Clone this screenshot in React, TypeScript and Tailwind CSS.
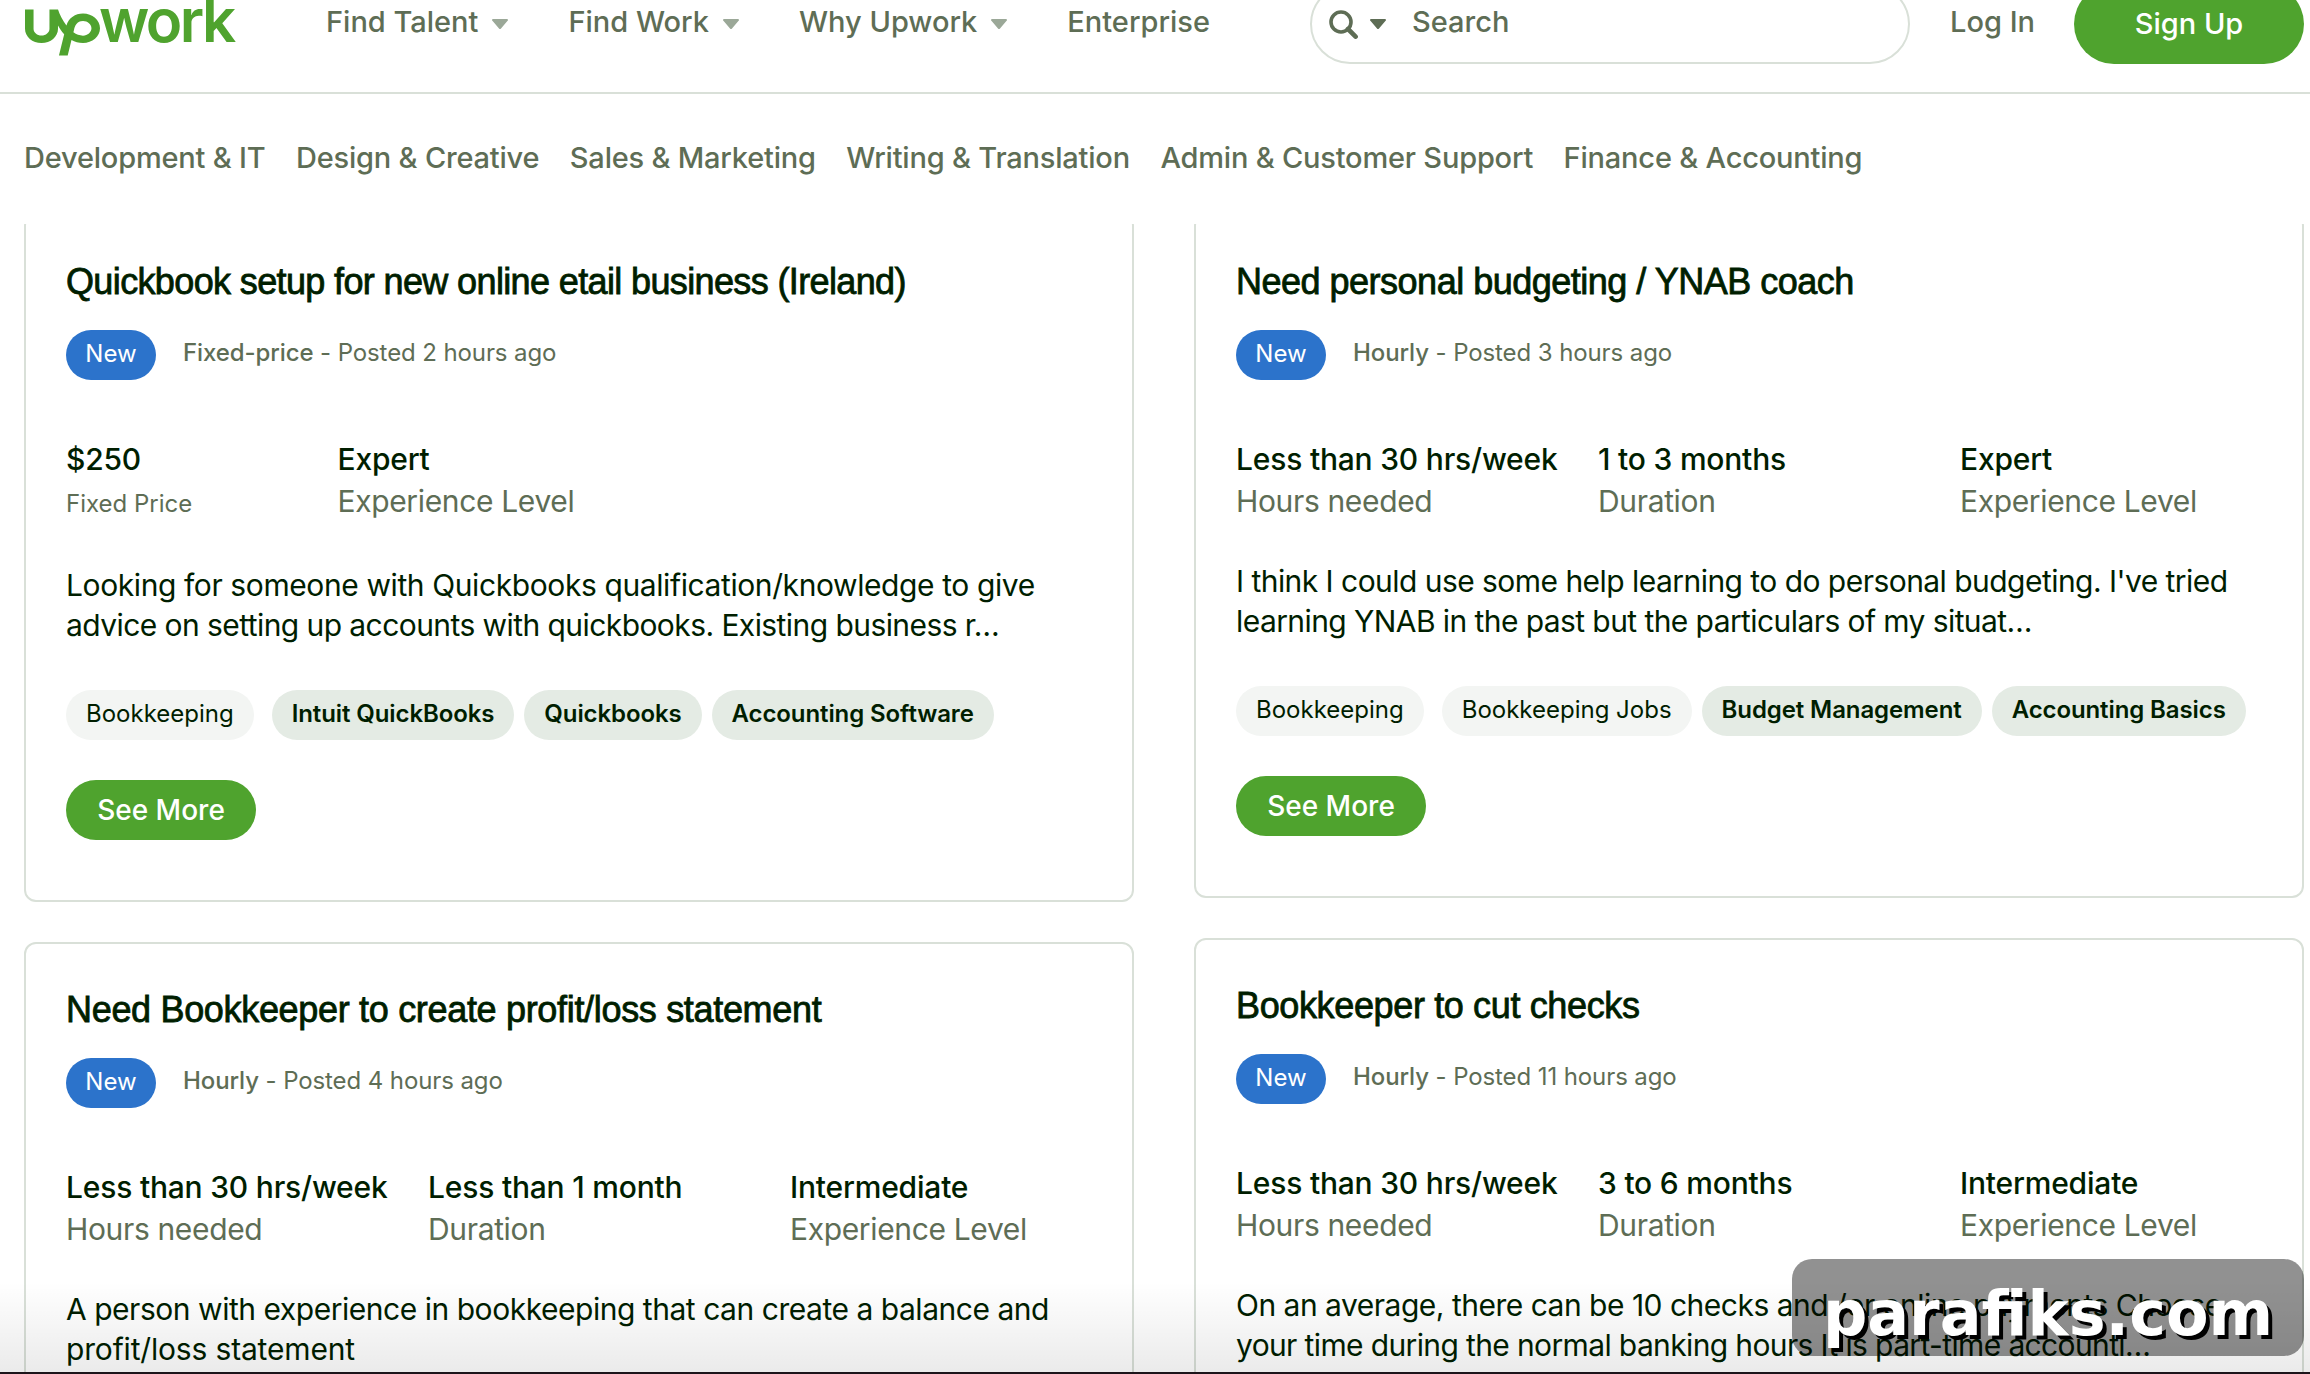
import clsx from "clsx";
import { SiUpwork } from "react-icons/si";

type Tag = { label: string; strong?: boolean };
type Stat = { value: string; label: string; small?: boolean };
type Line = { text: string; spacing: string };
type Job = {
  title: Line;
  type: string;
  posted: string;
  stats: Stat[];
  body: Line[];
  tags: Tag[];
};

const navItems = [
  { label: "Find Talent", menu: true },
  { label: "Find Work", menu: true },
  { label: "Why Upwork", menu: true },
  { label: "Enterprise", menu: false },
];

const categories = [
  "Development & IT",
  "Design & Creative",
  "Sales & Marketing",
  "Writing & Translation",
  "Admin & Customer Support",
  "Finance & Accounting",
];

const leftJobs: Job[] = [
  {
    title: { text: "Quickbook setup for new online etail business (Ireland)", spacing: "tracking-[-0.63px]" },
    type: "Fixed-price",
    posted: "Posted 2 hours ago",
    stats: [
      { value: "$250", label: "Fixed Price", small: true },
      { value: "Expert", label: "Experience Level" },
    ],
    body: [
      { text: "Looking for someone with Quickbooks qualification/knowledge to give", spacing: "tracking-[-0.4px]" },
      { text: "advice on setting up accounts with quickbooks. Existing business r…", spacing: "tracking-[-0.57px]" },
    ],
    tags: [
      { label: "Bookkeeping" },
      { label: "Intuit QuickBooks", strong: true },
      { label: "Quickbooks", strong: true },
      { label: "Accounting Software", strong: true },
    ],
  },
  {
    title: { text: "Need Bookkeeper to create profit/loss statement", spacing: "tracking-[-0.32px]" },
    type: "Hourly",
    posted: "Posted 4 hours ago",
    stats: [
      { value: "Less than 30 hrs/week", label: "Hours needed" },
      { value: "Less than 1 month", label: "Duration" },
      { value: "Intermediate", label: "Experience Level" },
    ],
    body: [
      { text: "A person with experience in bookkeeping that can create a balance and", spacing: "tracking-[-0.47px]" },
      { text: "profit/loss statement", spacing: "tracking-[-0.17px]" },
    ],
    tags: [],
  },
];

const rightJobs: Job[] = [
  {
    title: { text: "Need personal budgeting / YNAB coach", spacing: "tracking-[-0.5px]" },
    type: "Hourly",
    posted: "Posted 3 hours ago",
    stats: [
      { value: "Less than 30 hrs/week", label: "Hours needed" },
      { value: "1 to 3 months", label: "Duration" },
      { value: "Expert", label: "Experience Level" },
    ],
    body: [
      { text: "I think I could use some help learning to do personal budgeting. I've tried", spacing: "tracking-[-0.54px]" },
      { text: "learning YNAB in the past but the particulars of my situat…", spacing: "tracking-[-0.58px]" },
    ],
    tags: [
      { label: "Bookkeeping" },
      { label: "Bookkeeping Jobs" },
      { label: "Budget Management", strong: true },
      { label: "Accounting Basics", strong: true },
    ],
  },
  {
    title: { text: "Bookkeeper to cut checks", spacing: "tracking-[-0.36px]" },
    type: "Hourly",
    posted: "Posted 11 hours ago",
    stats: [
      { value: "Less than 30 hrs/week", label: "Hours needed" },
      { value: "3 to 6 months", label: "Duration" },
      { value: "Intermediate", label: "Experience Level" },
    ],
    body: [
      { text: "On an average, there can be 10 checks and /or online payments Choose", spacing: "tracking-[-0.5px]" },
      { text: "your time during the normal banking hours It is part-time accounti…", spacing: "tracking-[-0.63px]" },
    ],
    tags: [],
  },
];

function Caret({ className }: { className?: string }) {
  return (
    <svg viewBox="0 0 16 10" className={clsx("h-[10px] w-4 shrink-0", className)} fill="currentColor">
      <path d="M1 0h14a1 1 0 0 1 .8 1.6L9 9.4a1.3 1.3 0 0 1-2 0L.2 1.6A1 1 0 0 1 1 0z" />
    </svg>
  );
}

function Logo() {
  return (
    <div className="flex w-[302px] shrink-0 items-center pl-px text-[#4fa32e]">
      <SiUpwork preserveAspectRatio="none" className="mt-[16px] h-[65px] w-[75px] shrink-0" />
      <span className="-ml-px mb-[8px] text-[60px] leading-[60px] font-semibold tracking-[-2.6px]">work</span>
    </div>
  );
}

function Header() {
  return (
    <header className="-mt-[44px] flex h-[138px] shrink-0 items-center border-b-2 border-[#d9e0d8] pr-[6px] pl-6 text-[29px] font-medium text-[#5e6d55]">
      <Logo />
      <nav className="flex items-center gap-[60px] pb-[5px]">
        {navItems.map((item) => (
          <a key={item.label} className="flex items-center whitespace-nowrap">
            {item.label}
            {item.menu && <Caret className="mt-[5px] ml-[14px] text-[#9ba898]" />}
          </a>
        ))}
      </nav>
      <div className="ml-auto flex items-center gap-[39px]">
        <div className="mr-px flex h-20 w-[600px] items-center rounded-full border-2 border-[#d9e0d8] pl-[17px]">
          <svg viewBox="0 0 29 29" className="mt-px size-[29px]" fill="none" stroke="currentColor" strokeWidth="3.6">
            <circle cx="12" cy="12" r="10" />
            <path d="M19 19l7.6 7.6" strokeWidth="4.6" strokeLinecap="round" />
          </svg>
          <Caret className="ml-3" />
          <span className="ml-[26px] pb-[5px]">Search</span>
        </div>
        <a className="pb-[5px] whitespace-nowrap">Log In</a>
        <button className="h-20 w-[230px] rounded-full bg-[#4fa32e] font-medium text-white">Sign Up</button>
      </div>
    </header>
  );
}

function JobCard({ job }: { job: Job }) {
  return (
    <article className="rounded-xl border-2 border-[#d9e0d8] px-10 pt-[46px] pb-[60px]">
      <h2
        className={clsx(
          "font-['Liberation_Sans',sans-serif] text-[36px] leading-10 whitespace-nowrap [-webkit-text-stroke:0.8px]",
          job.title.spacing
        )}
      >
        {job.title.text}
      </h2>

      <div className="mt-7 flex items-center text-[24px] text-[#5e6d55]">
        <span className="flex h-[50px] w-[90px] items-center justify-center rounded-full bg-[#2c73cb] pb-[3px] text-white">
          New
        </span>
        <span className="ml-[27px] pb-[5px] tracking-[-0.1px]">
          <span className="font-medium">{job.type}</span> - {job.posted}
        </span>
      </div>

      <div className={clsx("-mr-[60px] mt-[58px] grid text-[30px] leading-[42px]", job.stats.length === 2 ? "grid-cols-4" : "grid-cols-3")}>
        {job.stats.map((stat) => (
          <div key={stat.label} className="whitespace-nowrap">
            <div className="font-medium tracking-[-0.2px]">{stat.value}</div>
            <div
              className={clsx(
                "text-[#5e6d55]",
                stat.small ? "pt-[3px] pb-px text-[24px] leading-[42px]" : "tracking-[-0.35px]"
              )}
            >
              {stat.label}
            </div>
          </div>
        ))}
      </div>

      <p className="mt-[39px] text-[30px] leading-10 whitespace-nowrap">
        {job.body.map((line) => (
          <span key={line.text} className={clsx("block", line.spacing)}>{line.text}</span>
        ))}
      </p>

      <div className="mt-[45px] flex h-[50px] gap-[10px] text-[24px]">
        {job.tags.map((tag, i) => (
          <span
            key={tag.label}
            className={clsx(
              "flex items-center rounded-full px-5 pb-[3px] whitespace-nowrap",
              tag.strong ? "bg-[#e4ebe4] font-semibold tracking-[-0.1px]" : "bg-[#f3f5f3]",
              i === 0 && "mr-2"
            )}
          >
            {tag.label}
          </span>
        ))}
      </div>

      <button className="mt-10 block h-[60px] w-[190px] rounded-full bg-[#4fa32e] text-[28px] font-medium text-white">
        See More
      </button>
    </article>
  );
}

export default function App() {
  return (
    <div className="relative flex h-[1374px] w-[2310px] flex-col overflow-hidden bg-white font-['Inter','Liberation_Sans',sans-serif] text-[#001e00]">
      <Header />

      <nav className="flex h-[130px] shrink-0 items-center gap-[30.5px] pb-[3px] pl-6 text-[29px] font-medium tracking-[-0.2px] whitespace-nowrap text-[#5e6d55]">
        {categories.map((name) => (
          <a key={name}>{name}</a>
        ))}
      </nav>

      {/* list is scrolled a little under the category bar */}
      <main className="min-h-0 flex-1 overflow-hidden">
        <div className="-mt-[10px] grid grid-cols-2 gap-[60px] pr-[6px] pl-6">
          {[leftJobs, rightJobs].map((jobs, i) => (
            <div key={i} className="flex flex-col gap-10">
              {jobs.map((job) => (
                <JobCard key={job.title.text} job={job} />
              ))}
            </div>
          ))}
        </div>
      </main>

      {/* bottom fade */}
      <div className="absolute inset-x-0 bottom-[2px] h-[90px] bg-gradient-to-b from-black/0 to-black/8" />
      <div className="absolute inset-x-0 bottom-0 h-[2px] bg-[#1c141a]" />

      {/* watermark */}
      <div className="absolute right-[6px] bottom-[18px] flex h-[97px] w-[512px] items-center justify-center rounded-[20px] bg-black/43 pt-3 font-['DejaVu_Sans',sans-serif] text-[62px] leading-none font-bold text-white [text-shadow:4px_4px_0_#000]">
        parafiks.com
      </div>
    </div>
  );
}
